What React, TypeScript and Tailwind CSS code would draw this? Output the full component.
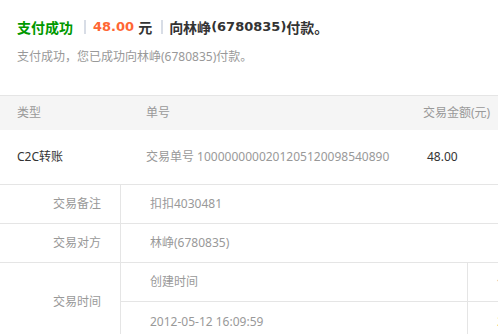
import React from "react";

export default function App() {
  const font = { fontFamily: '"Noto Sans", "Noto Sans CJK SC", sans-serif' };
  return (
    <div className="w-[498px] h-[334px] overflow-hidden bg-white" style={font}>
      <div className="w-[620px]">
        <div className="pl-[17px] pt-[17px]">
          <div className="flex items-center h-[20px] text-[14px] font-bold text-[#333] whitespace-nowrap">
            <span className="text-[#009900]">支付成功</span>
            <span className="ml-[11px] mr-[7px] w-[2px] h-[14px] bg-[#d8dde6]"></span>
            <span className="text-[#ff6633] font-['DejaVu_Sans',sans-serif] text-[13px]">48.00</span>
            <span className="ml-[4px]">元</span>
            <span className="ml-[9px] mr-[6px] w-[2px] h-[14px] bg-[#d8dde6]"></span>
            <span>向林峥</span>
            <span className="font-['DejaVu_Sans',sans-serif] text-[13px]">(6780835)</span>
            <span>付款。</span>
          </div>
          <div className="mt-[11px] h-[18px] leading-[18px] text-[12px] text-[#999] whitespace-nowrap">
            支付成功，您已成功向林峥(6780835)付款。
          </div>
        </div>

        <div className="mt-[29px] grid grid-cols-[146px_277px_1fr] h-[35px] items-center border-t border-[#e5e5e5] bg-[#f5f5f5] text-[12px] text-[#999] whitespace-nowrap">
          <div className="pl-[17px]">类型</div>
          <div>单号</div>
          <div>交易金额(元)</div>
        </div>
        <div className="grid grid-cols-[146px_277px_1fr] h-[55px] items-center border-b border-[#e5e5e5] text-[12px] whitespace-nowrap">
          <div className="pl-[17px] text-[#333]">C2C转账</div>
          <div className="text-[#999]">交易单号 1000000000201205120098540890</div>
          <div className="pl-[4px] text-[#333]">48.00</div>
        </div>

        <div className="text-[12px] text-[#999] whitespace-nowrap">
          <div className="grid grid-cols-[121px_347px_1fr] h-[39px] border-b border-[#e5e5e5]">
            <div className="flex items-center justify-end pr-[19px] border-r border-[#e5e5e5]">交易备注</div>
            <div className="flex items-center pl-[29px] col-span-2">扣扣4030481</div>
          </div>
          <div className="grid grid-cols-[121px_347px_1fr] h-[39px] border-b border-[#e5e5e5]">
            <div className="flex items-center justify-end pr-[19px] border-r border-[#e5e5e5]">交易对方</div>
            <div className="flex items-center pl-[29px] col-span-2">林峥(6780835)</div>
          </div>
          <div className="grid grid-cols-[121px_1fr] h-[78px]">
            <div className="flex items-center justify-end pr-[19px] border-r border-[#e5e5e5]">交易时间</div>
            <div className="flex flex-col">
              <div className="grid grid-cols-[347px_1fr] h-[39px] border-b border-[#e5e5e5]">
                <div className="flex items-center pl-[29px] border-r border-[#e5e5e5]">创建时间</div>
                <div className="flex items-center pl-[29px]">付款时间</div>
              </div>
              <div className="grid grid-cols-[347px_1fr] h-[39px]">
                <div className="flex items-center pl-[29px] border-r border-[#e5e5e5]">2012-05-12 16:09:59</div>
                <div className="flex items-center pl-[29px] text-[#e8c070]">2012-05-12 16:09:59</div>
              </div>
            </div>
          </div>
        </div>
      </div>
    </div>
  );
}
